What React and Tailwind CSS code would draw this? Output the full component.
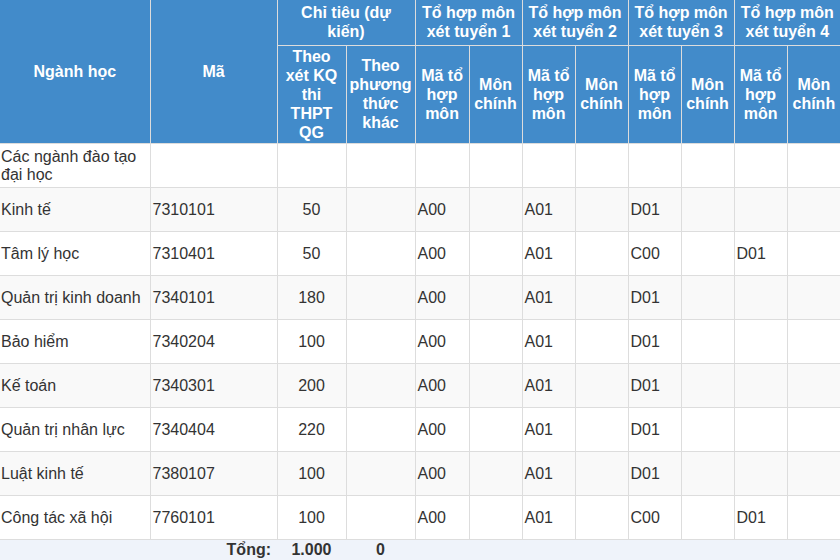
import React from "react";

const rows = [
  ["Các ngành đào tạo đại học", "", "", "", "", "", "", "", "", "", "", ""],
  ["Kinh tế", "7310101", "50", "", "A00", "", "A01", "", "D01", "", "", ""],
  ["Tâm lý học", "7310401", "50", "", "A00", "", "A01", "", "C00", "", "D01", ""],
  ["Quản trị kinh doanh", "7340101", "180", "", "A00", "", "A01", "", "D01", "", "", ""],
  ["Bảo hiểm", "7340204", "100", "", "A00", "", "A01", "", "D01", "", "", ""],
  ["Kế toán", "7340301", "200", "", "A00", "", "A01", "", "D01", "", "", ""],
  ["Quản trị nhân lực", "7340404", "220", "", "A00", "", "A01", "", "D01", "", "", ""],
  ["Luật kinh tế", "7380107", "100", "", "A00", "", "A01", "", "D01", "", "", ""],
  ["Công tác xã hội", "7760101", "100", "", "A00", "", "A01", "", "C00", "", "D01", ""],
];

const widths = [150, 127, 69, 69, 54, 53, 53, 53, 53, 53, 53, 53];

export default function App() {
  const th = "border border-[#dcdcdc] bg-[#428bca] text-white font-bold text-center align-middle px-[2px] leading-[19px]";
  return (
    <div className="w-[840px] h-[560px] overflow-hidden bg-white" style={{ fontFamily: '"Liberation Sans", Arial, sans-serif' }}>
      <table className="table-fixed border-collapse w-[840px] text-[16px] text-[#333]">
        <colgroup>
          {widths.map((w, i) => (
            <col key={i} style={{ width: w }} />
          ))}
        </colgroup>
        <thead>
          <tr className="h-[45px]">
            <th rowSpan={2} className={th + " border-l-0 border-t-0"}>Ngành học</th>
            <th rowSpan={2} className={th + " border-t-0"}>Mã</th>
            <th colSpan={2} className={th + " border-t-0"}>Chỉ tiêu (dự<br />kiến)</th>
            <th colSpan={2} className={th + " border-t-0"}>Tổ hợp môn xét tuyển 1</th>
            <th colSpan={2} className={th + " border-t-0"}>Tổ hợp môn xét tuyển 2</th>
            <th colSpan={2} className={th + " border-t-0"}>Tổ hợp môn xét tuyển 3</th>
            <th colSpan={2} className={th + " border-t-0 border-r-0"}>Tổ hợp môn xét tuyển 4</th>
          </tr>
          <tr className="h-[98px]">
            <th className={th}>Theo xét KQ thi THPT QG</th>
            <th className={th}>Theo phương thức khác</th>
            <th className={th}>Mã tổ hợp môn</th>
            <th className={th}>Môn chính</th>
            <th className={th}>Mã tổ hợp môn</th>
            <th className={th}>Môn chính</th>
            <th className={th}>Mã tổ hợp môn</th>
            <th className={th}>Môn chính</th>
            <th className={th}>Mã tổ hợp môn</th>
            <th className={th + " border-r-0"}>Môn chính</th>
          </tr>
        </thead>
        <tbody>
          {rows.map((r, i) => (
            <tr key={i} className={"h-[44px] " + (i % 2 === 1 ? "bg-[#f9f9f9]" : "bg-white")}>
              {r.map((c, j) => (
                <td
                  key={j}
                  className={
                    "border border-[#ddd] align-middle leading-[18px] pt-[2px] " +
                    (j === 0 ? "border-l-0 pl-[1px] pr-[2px] " : "px-[2px] ") +
                    (j === 11 ? "border-r-0 " : "") +
                    (j === 2 || j === 3 ? "text-center" : "text-left")
                  }
                >
                  {c}
                </td>
              ))}
            </tr>
          ))}
          <tr className="h-[22px] bg-[#eff3fa] font-bold">
            <td colSpan={2} className="text-right pr-[6px] leading-[normal]">Tổng:</td>
            <td className="text-center leading-[normal]">1.000</td>
            <td className="text-center leading-[normal]">0</td>
            <td colSpan={8}></td>
          </tr>
        </tbody>
      </table>
    </div>
  );
}
